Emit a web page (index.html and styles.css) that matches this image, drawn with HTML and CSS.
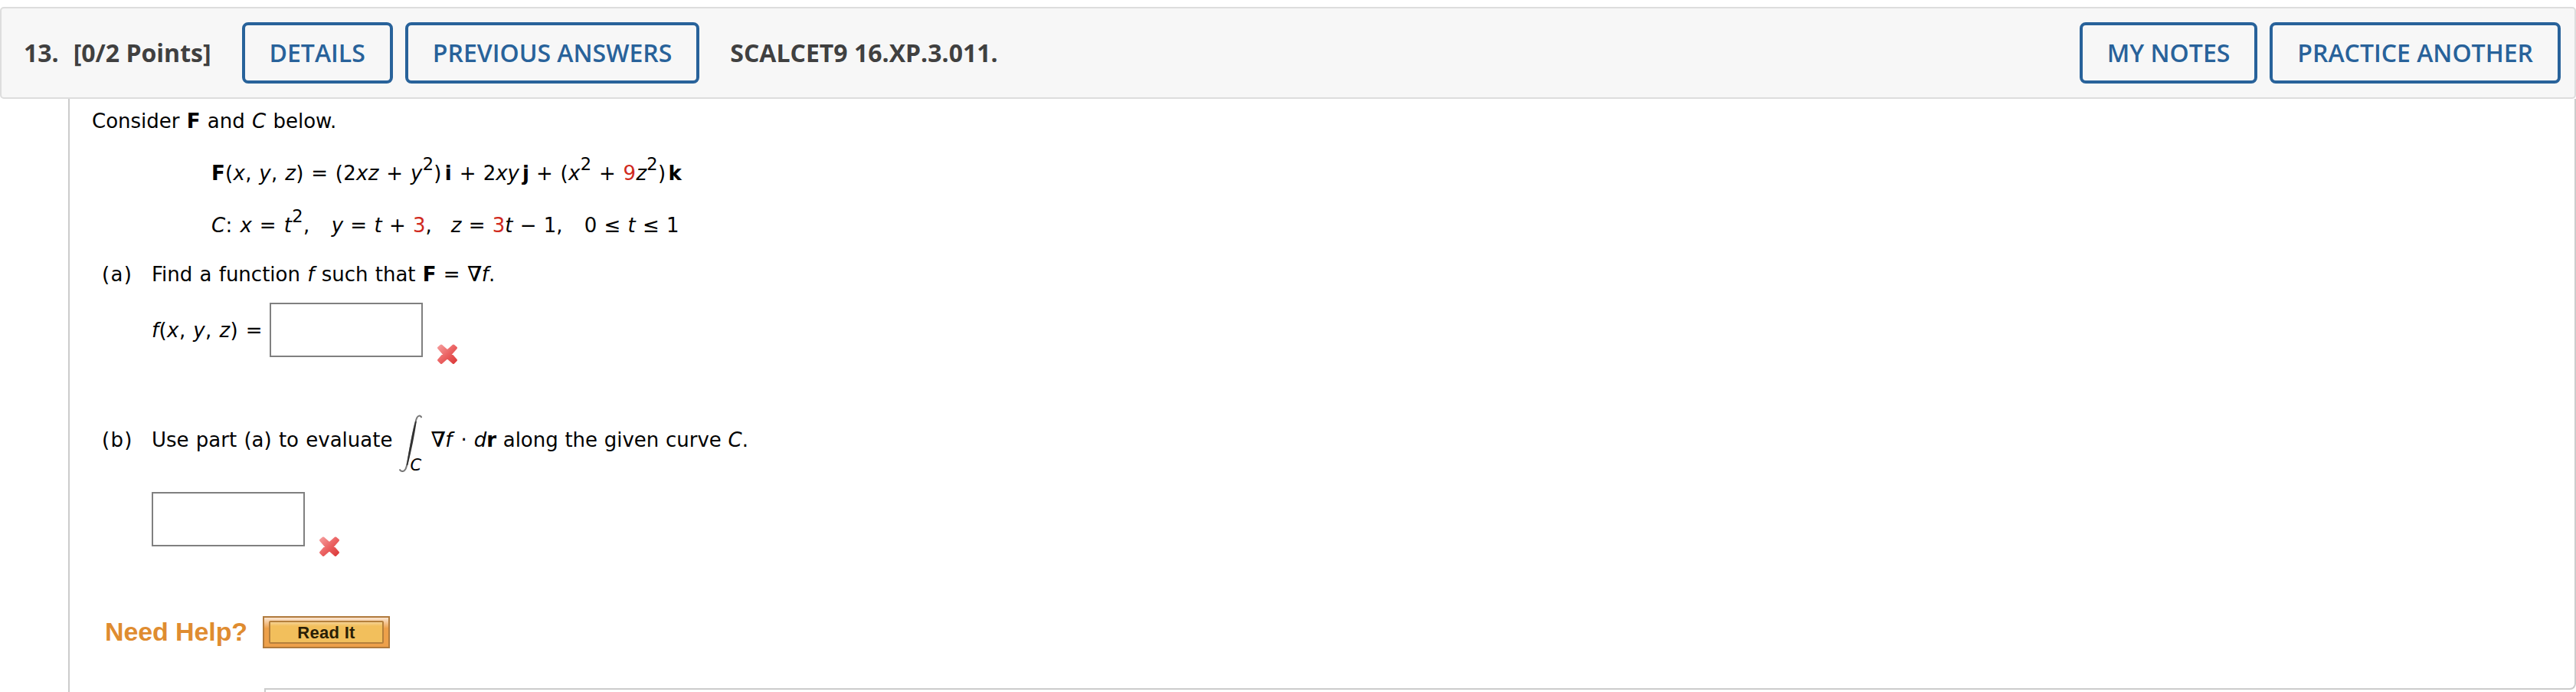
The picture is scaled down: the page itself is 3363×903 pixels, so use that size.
FILE: index.html
```
<!DOCTYPE html>
<html lang="en">
<head>
    <meta charset="UTF-8" />
    <meta name="viewport" content="width=device-width, initial-scale=1.0" />
    <title>Question 13</title>
    <link rel="stylesheet" href="styles.css">
</head>
<body>
    <header class="question-header">
        <span class="number">13.</span>
        <span class="points">[0/2 Points]</span>
        <button type="button" class="btn">DETAILS</button>
        <button type="button" class="btn">PREVIOUS ANSWERS</button>
        <span class="code">SCALCET9 16.XP.3.011.</span>
        <div class="header-right">
            <button type="button" class="btn">MY NOTES</button>
            <button type="button" class="btn">PRACTICE ANOTHER</button>
        </div>
    </header>

    <main class="question-body">
        <p class="line intro">Consider <b>F</b> and <i>C</i> below.</p>

        <p class="line eq field">
            <span class="field-x"><b>F</b>(<i>x</i>, <i>y</i>, <i>z</i>) = (2<i>xz</i> + <i>y</i><sup>2</sup>)</span>
            <b class="vec-i">i</b>
            <span class="field-y">+ 2<i>xy</i></span>
            <b class="vec-j">j</b>
            <span class="field-z">+ (<i>x</i><sup>2</sup> + <em>9</em><i>z</i><sup>2</sup>)</span>
            <b class="vec-k">k</b>
        </p>
        <p class="line eq curve">
            <span class="curve-x"><i>C</i>: <i>x</i> = <i>t</i><sup>2</sup>,</span>
            <span class="curve-y"><i>y</i> = <i>t</i> + <em>3</em>,</span>
            <span class="curve-z"><i>z</i> = <em>3</em><i>t</i> − 1,</span>
            <span class="curve-t">0 ≤ <i>t</i> ≤ 1</span>
        </p>

        <div class="part part-a">
            <span class="label">(a)</span>
            <p class="line find">Find a function <i>f</i> such that <b>F</b> = <span class="nabla">∇</span><i>f</i>.</p>
        </div>
        <div class="answer answer-a">
            <label class="line" for="answer-a"><i>f</i>(<i>x</i>, <i>y</i>, <i>z</i>) =</label>
            <input type="text" id="answer-a" />
            <svg class="wrong" viewBox="0 0 28 28"><use href="#cross" /></svg>
        </div>

        <div class="part part-b">
            <span class="label">(b)</span>
            <p class="line use">Use part (a) to evaluate</p>
            <span class="integral">
                <svg viewBox="0 0 30 75">
                    <path d="M29.5 4 C28 1 24.5 0 22.5 6 C19 18 17 31 14.5 44 C12.5 56 10.5 67 8.5 71 C6 75.5 2.5 74.5 0.5 71.5" fill="none" stroke="#777" stroke-width="2" />
                    <path d="M22 9 C17.5 24 13.5 48 10.5 66 C14.5 50 19.5 26 22 9 Z" fill="#222" stroke="#333" stroke-width="1.6" />
                </svg>
                <i>C</i>
            </span>
            <p class="line grad"><span class="nabla">∇</span><i>f</i></p>
            <span class="line dot">·</span>
            <p class="line along"><i>d</i><b>r</b> along the given curve <i>C</i>.</p>
        </div>
        <div class="answer answer-b">
            <input type="text" id="answer-b" />
            <svg class="wrong" viewBox="0 0 28 28"><use href="#cross" /></svg>
        </div>

        <div class="help">
            <span class="help-title">Need Help?</span>
            <button type="button" class="read-it"><span>Read It</span></button>
        </div>
    </main>

    <footer class="question-end">
        <div class="side"></div>
        <div class="bottom"></div>
    </footer>

    <svg width="0" height="0" class="defs">
        <defs>
            <linearGradient id="red" x1="0" y1="0" x2="1" y2="1">
                <stop offset="0" stop-color="#f59a9a" />
                <stop offset="0.5" stop-color="#eb6363" />
                <stop offset="1" stop-color="#dc3a3a" />
            </linearGradient>
            <symbol id="cross" viewBox="0 0 28 28">
                <path d="M6 3 L14 10 L22 3 L25.5 6 L18.5 14 L25.500 22 L22 25.500 L14 18.500 L6 25.500 L2.500 22 L9.500 14 L2.500 6 Z" fill="url(#red)" stroke="url(#red)" stroke-width="3" stroke-linejoin="round" />
            </symbol>
        </defs>
    </svg>
</body>
</html>
```
FILE: styles.css
```
* {
    box-sizing: border-box;
}

body {
    margin: 0;
    padding-top: 9px;
    height: 903px;
    overflow: hidden;
    background-color: #fff;
    font-family: "DejaVu Sans", sans-serif;
    font-size: 26px;
    color: #000;
}

p {
    margin: 0;
}

.question-header {
    display: flex;
    align-items: center;
    height: 120px;
    padding: 0 18px 0 29px;
    background-color: #f7f7f7;
    border: 2px solid #ddd;
    border-radius: 5px;
    font: bold 32px "Open Sans", sans-serif;
    color: #404040;
}

.number, .points, .code {
    margin-top: -2px;
}

.points {
    margin-left: 19px;
    margin-right: 40px;
}

.btn {
    height: 80px;
    margin-right: 16px;
    padding: 0 32px 2px;
    background: transparent;
    border: 4px solid #28629a;
    border-radius: 8px;
    font: 600 32px "Open Sans", sans-serif;
    color: #28629a;
}

.code {
    margin-left: 24px;
}

.header-right {
    display: flex;
    margin-left: auto;
}

.header-right .btn:last-child {
    margin-right: 0;
}

.question-body {
    height: 749px;
    margin-left: 89px;
    padding: 9px 0 0 29px;
    border-left: 2px solid #ccc;
    border-right: 2px solid #ccc;
}

.line, .label {
    line-height: 40px;
    white-space: nowrap;
    word-spacing: 1px;
}

sup {
    position: relative;
    top: -3px;
    font-size: 22.5px;
    line-height: 0;
}

em {
    font-style: normal;
    color: #d02a1e;
}

.nabla {
    font-family: "DejaVu Serif", serif;
    font-size: 27px;
    line-height: 0;
    text-shadow: 0.5px 0 #000;
}

.eq {
    display: flex;
    margin: 28px 0 0 156px;
}

.field-x {
    letter-spacing: 0.3px;
}

.vec-i {
    margin-left: 4px;
}

.field-y {
    margin-left: 10px;
}

.vec-j {
    margin-left: 4px;
}

.field-z {
    margin-left: 9px;
    letter-spacing: 0.3px;
}

.vec-k {
    margin-left: 3px;
}

.curve-x {
    letter-spacing: 0.4px;
}

.curve-y {
    margin-left: 28px;
}

.curve-z {
    margin-left: 25px;
}

.curve-t {
    margin-left: 28px;
}

.part {
    display: flex;
    margin-left: 13px;
}

.label {
    width: 65px;
    letter-spacing: 1.3px;
}

.part-a {
    margin-top: 24px;
}

.answer {
    display: flex;
    margin-left: 78px;
}

.answer-a {
    height: 81px;
    margin-top: 17px;
}

.answer-a label {
    width: 154px;
    margin-top: 16px;
    letter-spacing: 0.4px;
}

.answer input {
    width: 200px;
    height: 71px;
    padding: 0 8px;
    border: 2px solid #808080;
    background-color: #fff;
    font: inherit;
}

.wrong {
    align-self: flex-end;
    width: 28px;
    height: 28px;
    margin-left: 18px;
}

.part-b {
    height: 75px;
    margin-top: 65px;
}

.part-b .line, .part-b .label {
    margin-top: 13px;
}

.integral {
    display: flex;
    position: relative;
    margin-left: 9px;
}

.integral svg {
    width: 30px;
    height: 75px;
}

.integral i {
    position: absolute;
    left: 14px;
    bottom: 1px;
    font-size: 21px;
    line-height: 16px;
}

.grad {
    margin-left: 11px;
}

.dot {
    margin-left: 11px;
}

.along {
    margin-left: 9px;
    word-spacing: 0.4px;
}

.answer-b {
    height: 85px;
    margin-top: 26px;
}

.help {
    display: flex;
    margin: 77px 0 0 17px;
}

.help-title {
    width: 206px;
    font: bold 34px/40px "Liberation Sans", sans-serif;
    letter-spacing: -0.1px;
    color: #df8c30;
}

.read-it {
    width: 166px;
    height: 42px;
    padding: 4px 6px;
    background: linear-gradient(#fbe6d2, #eda04a 14px);
    border: 2px solid #b07a3c;
}

.read-it span {
    display: block;
    height: 30px;
    border: 2px solid #b5803c;
    border-radius: 2px;
    background: linear-gradient(#f5d293, #f2bf5c 5px);
    font: bold 22px/28px "Liberation Sans", sans-serif;
    letter-spacing: 0.3px;
    color: #2a1e06;
}

.question-end {
    display: flex;
    height: 25px;
}

/* continues down into the next block */
.side {
    width: 258px;
    margin-left: 89px;
    border-left: 2px solid #ccc;
    border-right: 2px solid #ccc;
    clip-path: polygon(0 0, 2px 0, 2px 20px, 100% 20px, 100% 100%, 0 100%);
}

.bottom {
    flex: 1;
    height: 22px;
    border-right: 2px solid #ccc;
    border-bottom: 2px solid #ccc;
    border-bottom-right-radius: 8px;
}

.defs {
    position: absolute;
}
```
